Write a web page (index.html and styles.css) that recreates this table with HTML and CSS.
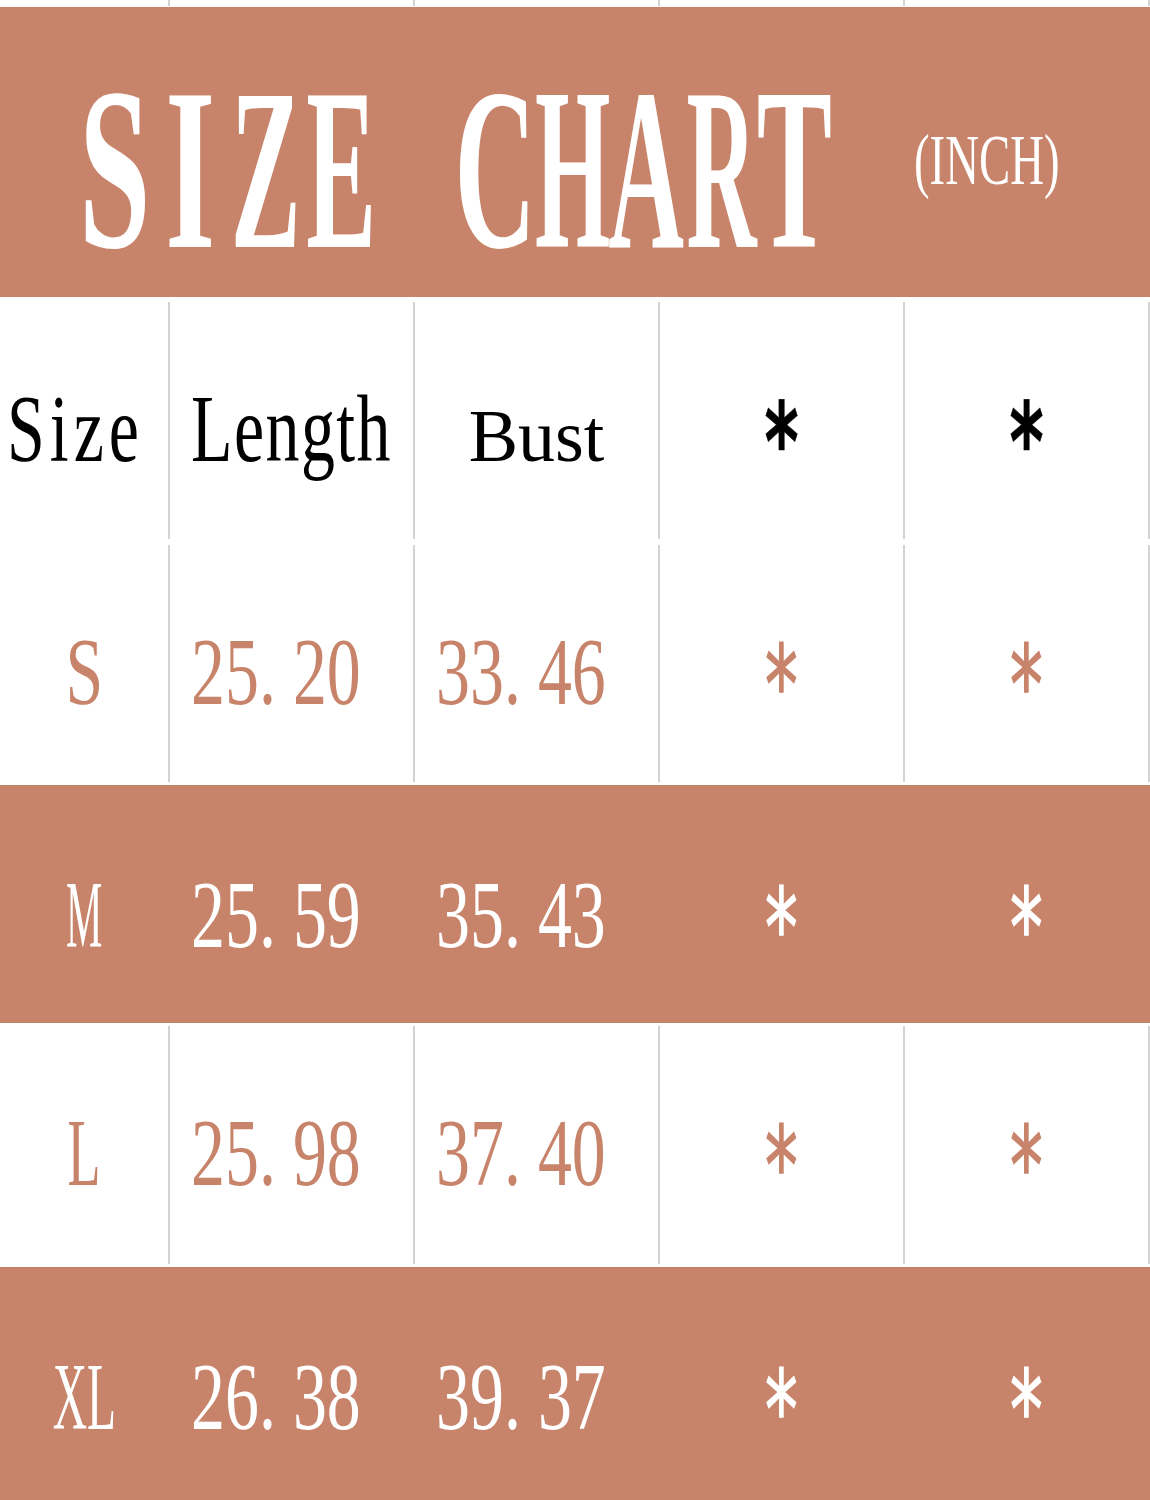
FILE: index.html
```html
<!DOCTYPE html>
<html lang="en">
<head>
<meta charset="utf-8">
<title>Size Chart</title>
<link rel="stylesheet" href="styles.css">
</head>
<body>
<div class="sheet">
  <div class="row strip">
    <div class="cell"></div><div class="cell"></div><div class="cell"></div><div class="cell"></div><div class="cell"></div>
  </div>
  <header class="banner">
    <div class="title-box"><h1 class="title"><span class="ch wide">S</span><span class="ch wide">I</span><span class="ch tight">Z</span><span class="ch tight">E</span><span class="ch"> </span><span class="ch">C</span><span class="ch slim">H</span><span class="ch tight">A</span><span class="ch slim">R</span><span class="ch">T</span></h1></div>
    <div class="unit-box"><span class="unit">(INCH)</span></div>
  </header>
  <div class="row head">
    <div class="cell c-left"><span class="cond hd-size">Size</span></div>
    <div class="cell c-num"><span class="cond hd-len">Length</span></div>
    <div class="cell"><span class="bust">Bust</span></div>
    <div class="cell"><span class="star star-head">*</span></div>
    <div class="cell"><span class="star star-head">*</span></div>
  </div>
  <div class="row light r-s">
    <div class="cell"><span class="cond">S</span></div>
    <div class="cell c-num"><span class="cond">25<span class="dot">.</span>20</span></div>
    <div class="cell c-num"><span class="cond">33<span class="dot">.</span>46</span></div>
    <div class="cell"><span class="star">*</span></div>
    <div class="cell"><span class="star">*</span></div>
  </div>
  <div class="row dark r-m">
    <div class="cell"><span class="cond sz-m">M</span></div>
    <div class="cell c-num"><span class="cond">25<span class="dot">.</span>59</span></div>
    <div class="cell c-num"><span class="cond">35<span class="dot">.</span>43</span></div>
    <div class="cell"><span class="star">*</span></div>
    <div class="cell"><span class="star">*</span></div>
  </div>
  <div class="row light r-l">
    <div class="cell"><span class="cond sz-l">L</span></div>
    <div class="cell c-num"><span class="cond">25<span class="dot">.</span>98</span></div>
    <div class="cell c-num"><span class="cond">37<span class="dot">.</span>40</span></div>
    <div class="cell"><span class="star">*</span></div>
    <div class="cell"><span class="star">*</span></div>
  </div>
  <div class="row dark r-xl">
    <div class="cell"><span class="cond sz-xl">XL</span></div>
    <div class="cell c-num"><span class="cond">26<span class="dot">.</span>38</span></div>
    <div class="cell c-num"><span class="cond">39<span class="dot">.</span>37</span></div>
    <div class="cell"><span class="star">*</span></div>
    <div class="cell"><span class="star">*</span></div>
  </div>
</div>
</body>
</html>
```
FILE: styles.css
```css
html, body {
  margin: 0;
  background: #ffffff;
}

.sheet {
  width: 1150px;
  height: 1500px;
  overflow: hidden;
  font-family: "Liberation Serif", "Times New Roman", serif;
}

.row {
  display: grid;
  grid-template-columns: 170px repeat(4, 245px);
  box-sizing: border-box;
}

.cell {
  box-sizing: border-box;
  border-right: 2px solid #d3d3d3;
  text-align: center;
  font-size: 95px;
  line-height: 95px;
  padding-top: 80px;
  white-space: nowrap;
}

/* thin white strip above the banner */
.strip {
  height: 7px;
  padding-bottom: 1px;
}
.strip .cell {
  padding: 0;
}

/* banner */
.banner {
  height: 290px;
  background: #c8846b;
  display: flex;
  align-items: flex-start;
  color: #ffffff;
}

.title-box {
  flex: none;
  width: 830px;
  box-sizing: border-box;
  padding: 47.7px 0 0 77px;
  white-space: nowrap;
}

.title {
  display: inline-block;
  margin: 0;
  font-size: 230px;
  line-height: 1;
  font-weight: bold;
  white-space: nowrap;
  transform: scaleX(0.49);
  transform-origin: left top;
}

.ch {
  display: inline-block;
  width: 154.08px;
  text-align: center;
}
.ch.wide { transform: scaleX(1.14); }
.ch.tight { transform: scaleX(0.93); }
.ch.slim { transform: scaleX(0.86); }

.unit-box {
  flex: none;
  margin-left: 84px;
  padding-top: 117.4px;
  white-space: nowrap;
}

.unit {
  display: inline-block;
  font-size: 72px;
  line-height: 1;
  transform: scaleX(0.65);
  transform-origin: left top;
}

/* table rows */
.head {
  height: 245px;
  padding: 5px 0 3px;
  color: #000000;
}

.light {
  padding: 3px 0;
  color: #c8846b;
}

.dark {
  padding: 3px 0;
  background: #c8846b;
  color: #ffffff;
}
.dark .cell {
  border-right-color: transparent;
}

.r-s { height: 243px; }
.r-m { height: 238px; }
.r-l { height: 244px; }
.r-xl { height: 240px; }

/* condensed text */
.cond {
  display: inline-block;
  transform: scaleX(0.715);
}

.c-num {
  text-align: left;
  padding-left: 21px;
}
.c-left {
  text-align: left;
  padding-left: 7px;
}
.c-num .cond,
.c-left .cond {
  transform-origin: left center;
}

.hd-size { letter-spacing: 7px; }
.hd-len { letter-spacing: 2px; }

.dot {
  margin-right: 0.25em;
}

.sz-m { transform: scaleX(0.43); }
.sz-l { transform: scaleX(0.57); }
.sz-xl { transform: scaleX(0.5); }

.bust {
  font-size: 74px;
}

.star {
  display: inline-block;
  font-family: "DejaVu Sans", sans-serif;
  font-size: 109px;
  line-height: 0.5;
  -webkit-text-stroke: 1.6px currentColor;
  transform: translateY(19px) scaleX(0.6);
}

.star-head {
  font-weight: bold;
  color: #000000;
  -webkit-text-stroke: 0.6px currentColor;
}
```
